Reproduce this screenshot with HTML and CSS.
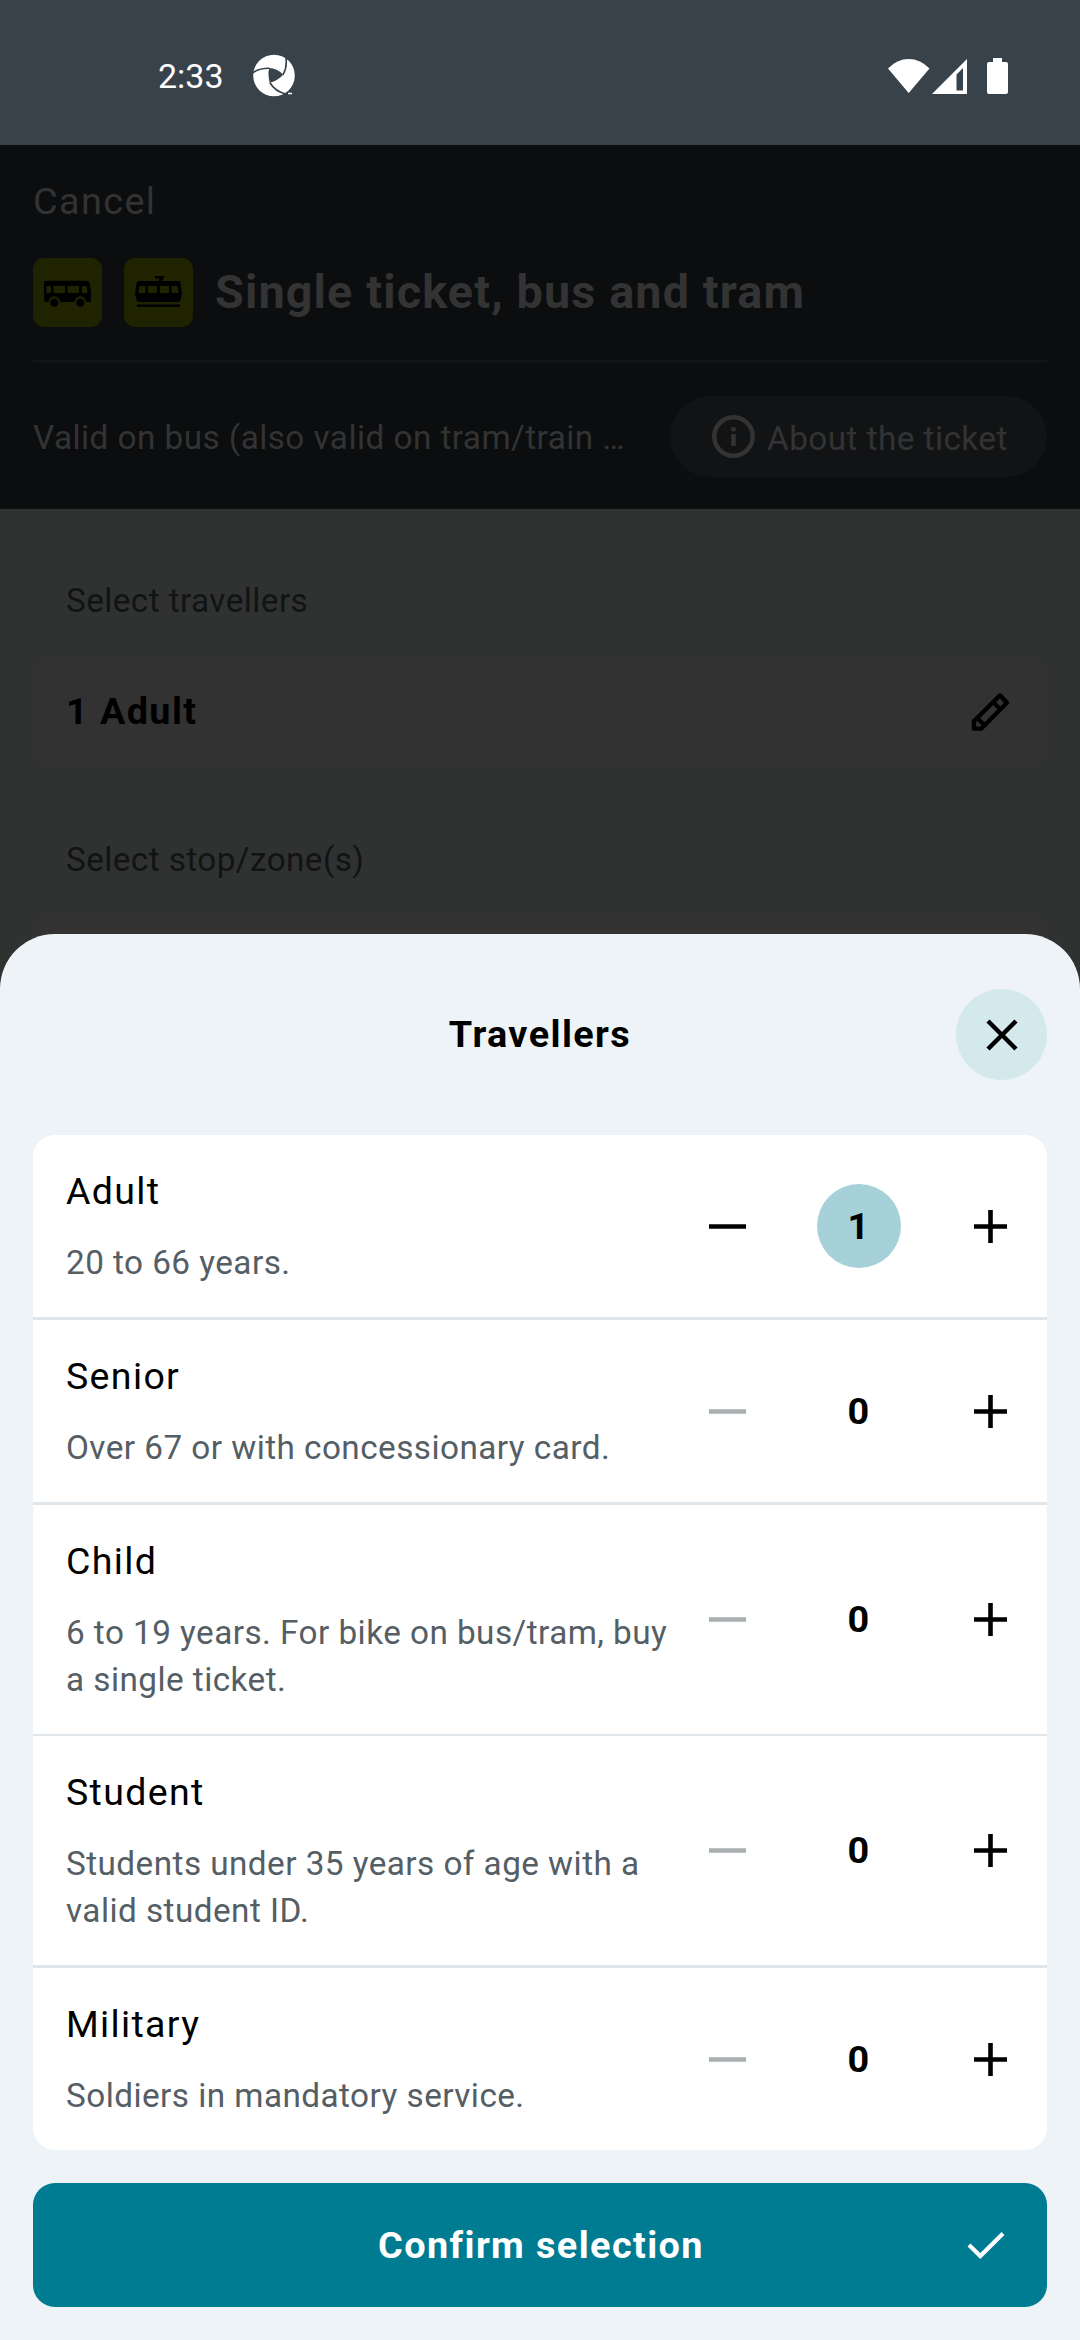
FILE: index.html
```html
<!DOCTYPE html>
<html lang="en">
<head>
<meta charset="utf-8">
<title>Travellers</title>
<link rel="stylesheet" href="styles.css">
</head>
<body>
<svg class="symbols" width="0" height="0">
  <symbol id="minus" viewBox="0 0 37 33"><path d="M0 16.500H37" fill="none" stroke="currentColor" stroke-width="4.600"/></symbol>
  <symbol id="plus" viewBox="0 0 33 33"><path d="M0 16.500H33M16.500 0V33" fill="none" stroke="currentColor" stroke-width="4.600"/></symbol>
</svg>
<div class="screen">
  <div class="status">
    <span class="clock">2:33</span>
    <svg class="app-mark" width="42" height="44" viewBox="0 0 42 44">
      <circle cx="21" cy="21.500" r="20.800" fill="#fff"/>
      <path d="M16.200 14Q24 14 30.200 20.700Q25 26.500 16.800 28.700Q14.500 21 16.200 14Z" fill="#38424a"/>
      <path d="M0 18.700Q6 14 16.500 14.200M30 20.800Q34.500 13 32.800 3M16.800 28.500Q22 37.500 33 40" fill="none" stroke="#38424a" stroke-width="1.600"/>
      <path d="M35 39.500H39" stroke="#fff" stroke-width="1.500"/>
    </svg>
    <svg class="signals" width="122" height="40" viewBox="0 0 122 40" fill="#fff">
      <path d="M0 12.500Q9 3 20.700 3Q32.500 3 41.500 12.500L20.700 37Z"/>
      <path fill-rule="evenodd" d="M79 3V38H44ZM75 12L68.500 18.500V34.500H75Z"/>
      <path d="M105 2H114V6H118Q120 6 120 8V36Q120 38 118 38H101Q99 38 99 36V8Q99 6 101 6H105Z"/>
    </svg>
  </div>
  <header class="header">
    <div class="cancel">Cancel</div>
    <div class="title-row">
      <svg class="mode" width="69" height="69" viewBox="0 0 69 69">
        <rect width="69" height="69" rx="11" fill="#1f2300"/>
        <path d="M13 22.700H53.500Q56 22.700 56.500 25L58 34V44H53A5.700 5.700 0 0 0 41.600 44H27A5.700 5.700 0 0 0 15.600 44H13Q11 44 11 42V24.700Q11 22.700 13 22.700Z"/>
        <path fill="#1f2300" d="M13.500 28H18V35H13.500ZM20.500 28H32V35H20.500ZM34.500 28H46V35H34.500ZM49 28H53.500L54.700 35H49Z"/>
        <circle cx="21.300" cy="44.800" r="4"/><circle cx="47.300" cy="44.800" r="4"/>
      </svg>
      <svg class="mode" width="69" height="69" viewBox="0 0 69 69">
        <rect width="69" height="69" rx="11" fill="#1f2300"/>
        <path d="M31 18H40V20L37.500 23H54Q56 23 56.500 25L58 36L56.500 42Q56 44 54 44H15Q13 44 12.500 42L11 36L12.500 25Q13 23 15 23H34L36 20.500H31ZM13 46.500H56V49H13Z"/>
        <path fill="#1f2300" d="M15.500 28H21.500V35H14.500ZM24 28H33V35H24ZM36 28H45V35H36ZM47.500 28H53.500L54.700 35H47.500Z"/>
      </svg>
      <h1 class="title">Single ticket, bus and tram</h1>
    </div>
    <div class="about-row">
      <span class="valid">Valid on bus (also valid on tram/train …</span>
      <span class="pill">
        <svg width="43" height="43" viewBox="0 0 43 43" fill="none" stroke="#333" stroke-width="4.500"><circle cx="21.500" cy="21.500" r="19.200"/><path d="M21.500 19V31M21.500 12.300V16.300"/></svg>
        <span class="about">About the ticket</span>
      </span>
    </div>
  </header>
  <main class="form">
    <div class="label">Select travellers</div>
    <div class="field">
      <span>1 Adult</span>
      <svg class="pencil" width="44" height="44" viewBox="0 0 44 44" fill="none" stroke="#000" stroke-width="4.300" stroke-linejoin="round"><path d="M3.900 31.300V38.700H11.200L37 12.800L30 5.200ZM23.300 12.200L30.700 19.800M7 28L15 35.500"/></svg>
    </div>
    <div class="label">Select stop/zone(s)</div>
    <div class="field"></div>
  </main>
  <section class="sheet">
    <div class="sheet-head">
      <h2 class="sheet-title">Travellers</h2>
      <span class="close"><svg width="32" height="32" viewBox="0 0 32 32" fill="none" stroke="#000" stroke-width="4.500"><path d="M2 2L30 30M30 2L2 30"/></svg></span>
    </div>
    <div class="list">
      <div class="row">
        <div class="text"><div class="name">Adult</div><div class="desc">20 to 66 years.</div></div>
        <div class="stepper"><svg class="minus"><use href="#minus"/></svg><b class="count selected">1</b><svg class="plus"><use href="#plus"/></svg></div>
      </div>
      <div class="row">
        <div class="text"><div class="name">Senior</div><div class="desc">Over 67 or with concessionary card.</div></div>
        <div class="stepper"><svg class="minus off"><use href="#minus"/></svg><b class="count">0</b><svg class="plus"><use href="#plus"/></svg></div>
      </div>
      <div class="row thin">
        <div class="text"><div class="name">Child</div><div class="desc">6 to 19 years. For bike on bus/tram, buy<br>a single ticket.</div></div>
        <div class="stepper"><svg class="minus off"><use href="#minus"/></svg><b class="count">0</b><svg class="plus"><use href="#plus"/></svg></div>
      </div>
      <div class="row">
        <div class="text"><div class="name">Student</div><div class="desc">Students under 35 years of age with a<br>valid student ID.</div></div>
        <div class="stepper"><svg class="minus off"><use href="#minus"/></svg><b class="count">0</b><svg class="plus"><use href="#plus"/></svg></div>
      </div>
      <div class="row">
        <div class="text"><div class="name">Military</div><div class="desc">Soldiers in mandatory service.</div></div>
        <div class="stepper"><svg class="minus off"><use href="#minus"/></svg><b class="count">0</b><svg class="plus"><use href="#plus"/></svg></div>
      </div>
    </div>
    <div class="confirm">
      <span>Confirm selection</span>
      <svg class="check" width="38" height="28" viewBox="0 0 38 28" fill="none" stroke="#fff" stroke-width="4.200"><path d="M2 14L13.300 25L36 2.500"/></svg>
    </div>
  </section>
</div>
</body>
</html>
```
FILE: styles.css
```css
* { box-sizing: border-box; }
body { margin: 0; font-family: Roboto, sans-serif; }
h1, h2 { margin: 0; }
svg { display: block; flex: none; }
.symbols { position: absolute; }
.screen {
  width: 1080px; height: 2340px; overflow: hidden;
  display: flex; flex-direction: column;
  background: #303231; position: relative;
  font-size: 37.8px; line-height: 47px; letter-spacing: 1.4px;
  white-space: nowrap;
}
.status {
  height: 145px; flex: none; background: #38424a; color: #fff;
  display: flex; align-items: center; padding: 6px 70px 0 158px;
}
.clock { font-size: 34px; letter-spacing: 0; padding-top: 2px; }
.app-mark { margin-left: 29px; }
.signals { margin-left: auto; }
.header { height: 364px; flex: none; padding: 33px 33px 0; background: #0b0d0e; color: #333; }
.title-row { display: flex; align-items: center; height: 69px; margin-top: 33px; }
.mode { margin-right: 22px; }
.title { font-size: 46.75px; font-weight: 700; letter-spacing: 1.13px; }
.about-row {
  margin-top: 33px; border-top: 3px solid #111314; padding-top: 33px;
  display: flex; justify-content: space-between; align-items: center;
  font-size: 33.3px; letter-spacing: 0.45px;
}
.valid { padding-top: 1px; }
.about { padding-top: 3px; }
.pill {
  width: 377px; height: 81px; border-radius: 41px; background: #121315;
  display: flex; align-items: center; padding-left: 42px; gap: 12px;
}
.form { padding: 0 33px; display: flex; flex-direction: column; }
.label { font-size: 33.3px; letter-spacing: 0.42px; color: #111315; padding: 68px 33px 0; height: 146px; }
.field {
  height: 113px; border-radius: 22px; background: #333232; padding: 0 33px;
  display: flex; justify-content: space-between; align-items: center;
  font-weight: 700; color: #000;
}
.sheet {
  position: absolute; left: 0; right: 0; top: 934px; bottom: 0;
  border-radius: 55px 55px 0 0; background: #edf3f6; padding: 55px 33px 33px;
}
.sheet-head { display: grid; grid-template-columns: 91px 1fr 91px; align-items: center; height: 91px; }
.sheet-title { grid-column: 2; text-align: center; font-size: 37.8px; font-weight: 700; }
.close {
  width: 91px; height: 91px; border-radius: 50%; background: #d4e9ec;
  display: flex; align-items: center; justify-content: center;
}
.list { margin-top: 55px; background: #fff; border-radius: 22px; }
.row {
  display: flex; justify-content: space-between; align-items: center;
  padding: 33px; border-bottom: 3px solid #e1e6ea;
}
.row.thin { border-bottom-width: 2px; }
.row:last-child { border-bottom: 0; }
.text { display: flex; flex-direction: column; gap: 24px; margin-bottom: -2px; }
.name { font-size: 37.5px; letter-spacing: 1.35px; }
.desc { font-size: 33.3px; letter-spacing: 0.45px; color: #555e65; }
.stepper { display: flex; align-items: center; color: #000; }
.minus { width: 37px; height: 33px; }
.minus.off { color: #a9aeb1; }
.count {
  width: 84px; height: 84px; margin: -10px 73px -10px 71px; border-radius: 50%;
  display: flex; align-items: center; justify-content: center;
}
.selected { background: #a6d1d9; }
.plus { width: 33px; height: 33px; margin-right: 7px; }
.confirm {
  margin-top: 33px; height: 124px; border-radius: 22px; background: #007c92; color: #fff;
  display: grid; grid-template-columns: 82px 1fr 38px; align-items: center;
  padding-right: 42px; font-weight: 700; text-align: center;
}
.confirm span { grid-column: 2; }
```
